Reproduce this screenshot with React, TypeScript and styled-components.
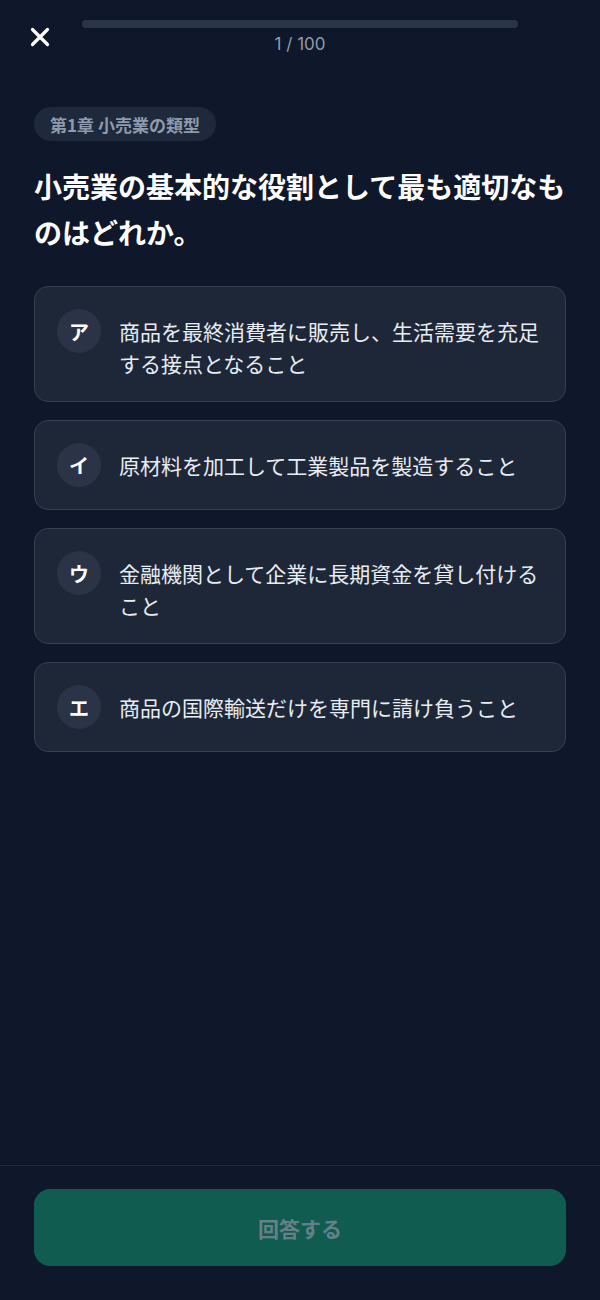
import styled, { createGlobalStyle } from "styled-components";

const GlobalStyle = createGlobalStyle`
  html, body {
    margin: 0;
    padding: 0;
    background: #0f172a;
  }
  body {
    font-family: "Noto Sans CJK JP", "Noto Sans", sans-serif;
    color: #f1f5f9;
  }
  * { box-sizing: border-box; }
`;

const Page = styled.div`
  width: 600px;
  min-height: 1300px;
  display: flex;
  flex-direction: column;
  background: #0f172a;
`;

const Header = styled.header`
  display: grid;
  grid-template-columns: 40px 1fr 40px;
  column-gap: 22px;
  padding: 20px 20px 0;
  align-items: start;
`;

const CloseButton = styled.button`
  width: 40px;
  height: 34px;
  padding: 0;
  border: none;
  background: transparent;
  display: flex;
  align-items: center;
  justify-content: center;
  cursor: pointer;
`;

const ProgressWrap = styled.div`
  display: flex;
  flex-direction: column;
  align-items: center;
`;

const Track = styled.div`
  width: 100%;
  height: 8px;
  border-radius: 4px;
  background: #2b3548;
  overflow: hidden;
`;

const Fill = styled.div`
  height: 100%;
  background: #10b981;
  border-radius: 4px;
`;

const Counter = styled.span`
  margin-top: 5px;
  font-family: Inter, "Noto Sans", sans-serif;
  font-size: 17px;
  line-height: 22px;
  color: #8f9bad;
`;

const Main = styled.main`
  flex: 1;
  padding: 52px 34px 0;
  display: flex;
  flex-direction: column;
  align-items: flex-start;
`;

const Chip = styled.span`
  height: 34px;
  padding: 0 16px;
  border-radius: 17px;
  background: #1e293b;
  color: #8f9bad;
  font-size: 17px;
  font-weight: 700;
  display: inline-flex;
  align-items: center;
`;

const Question = styled.h1`
  margin: 22px 0 0;
  font-size: 28px;
  line-height: 46px;
  font-weight: 700;
  color: #ffffff;
`;

const Options = styled.div`
  width: 100%;
  margin-top: 31px;
  display: flex;
  flex-direction: column;
  gap: 18px;
`;

const OptionCard = styled.button`
  width: 100%;
  display: flex;
  align-items: flex-start;
  gap: 18px;
  padding: 22px 20px 22px 22px;
  border: 1px solid #334155;
  border-radius: 14px;
  background: #1e2738;
  text-align: left;
  cursor: pointer;
  font-family: inherit;
`;

const Badge = styled.span`
  flex: 0 0 44px;
  width: 44px;
  height: 44px;
  border-radius: 50%;
  background: #2a3446;
  color: #ffffff;
  font-size: 20px;
  font-weight: 700;
  display: flex;
  align-items: center;
  justify-content: center;
`;

const OptionText = styled.span`
  flex: 1;
  margin-top: 6px;
  font-size: 21px;
  line-height: 32px;
  color: #e8edf3;
`;

const Footer = styled.footer`
  border-top: 1px solid #1e293b;
  padding: 23px 34px 34px;
`;

const SubmitButton = styled.button`
  width: 100%;
  height: 77px;
  border: none;
  border-radius: 16px;
  background: #115c50;
  color: #66808a;
  font-family: inherit;
  font-size: 21px;
  font-weight: 700;
  cursor: not-allowed;
`;

const choices = [
  { label: "ア", text: "商品を最終消費者に販売し、生活需要を充足する接点となること" },
  { label: "イ", text: "原材料を加工して工業製品を製造すること" },
  { label: "ウ", text: "金融機関として企業に長期資金を貸し付けること" },
  { label: "エ", text: "商品の国際輸送だけを専門に請け負うこと" },
];

function App() {
  const current = 1;
  const total = 100;
  return (
    <Page>
      <GlobalStyle />
      <Header>
        <CloseButton aria-label="閉じる">
          <svg width="20" height="20" viewBox="0 0 20 20">
            <path
              d="M2.5 2.5 L17.5 17.5 M17.5 2.5 L2.5 17.5"
              stroke="#ffffff"
              strokeWidth="3.2"
              strokeLinecap="round"
            />
          </svg>
        </CloseButton>
        <ProgressWrap>
          <Track>
            <Fill style={{ width: "0%" }} />
          </Track>
          <Counter>
            {current} / {total}
          </Counter>
        </ProgressWrap>
        <span />
      </Header>
      <Main>
        <Chip>第1章 小売業の類型</Chip>
        <Question>小売業の基本的な役割として最も適切なものはどれか。</Question>
        <Options>
          {choices.map(c => (
            <OptionCard key={c.label}>
              <Badge>{c.label}</Badge>
              <OptionText>{c.text}</OptionText>
            </OptionCard>
          ))}
        </Options>
      </Main>
      <Footer>
        <SubmitButton disabled>回答する</SubmitButton>
      </Footer>
    </Page>
  );
}

export default App;
